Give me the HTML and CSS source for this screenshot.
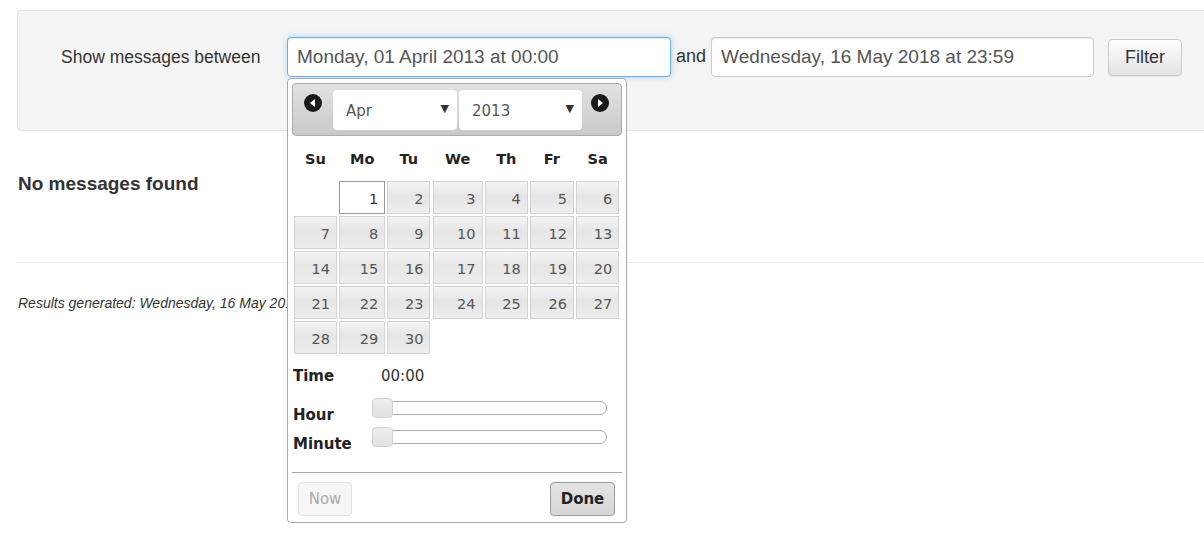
FILE: index.html
```html
<!DOCTYPE html>
<html lang="en">
<head>
  <meta charset="UTF-8">
  <title>Messages</title>
  <link rel="stylesheet" href="styles.css">
</head>
<body>

  <div class="page">
    <div class="filter-panel">
      <form class="filter-row">
        <label class="filter-label">Show messages between</label>
        <input class="date-input focused" type="text" value="Monday, 01 April 2013 at 00:00">
        <span class="and">and</span>
        <input class="date-input" type="text" value="Wednesday, 16 May 2018 at 23:59">
        <button type="button" class="filter-btn">Filter</button>
      </form>
    </div>

    <h4 class="empty">No messages found</h4>
    <hr class="sep">
    <p class="generated">Results generated: Wednesday, 16 May 2018 at 10:42</p>
  </div>

  <!-- datepicker popup -->
  <div class="datepicker">
    <div class="dp-header">
      <a class="dp-nav">
        <svg width="18" height="18" viewBox="0 0 18 18"><circle cx="9" cy="9" r="9" fill="#1a1a1a"/><path d="M11 5 L6 9 L11 13 Z" fill="#fff"/></svg>
      </a>
      <div class="dp-selects">
        <div class="dp-select month"><span>Apr</span><span class="caret">▼</span></div>
        <div class="dp-select year"><span>2013</span><span class="caret">▼</span></div>
      </div>
      <a class="dp-nav">
        <svg width="18" height="18" viewBox="0 0 18 18"><circle cx="9" cy="9" r="9" fill="#1a1a1a"/><path d="M7 5 L12 9 L7 13 Z" fill="#fff"/></svg>
      </a>
    </div>

    <div class="dp-grid" id="dp-grid">
      <div class="dow">Su</div>
      <div class="dow">Mo</div>
      <div class="dow">Tu</div>
      <div class="dow">We</div>
      <div class="dow">Th</div>
      <div class="dow">Fr</div>
      <div class="dow">Sa</div>
    </div>

    <div class="dp-time">
      <div class="time-row">
        <span class="t-label">Time</span>
        <span class="t-value">00:00</span>
      </div>
      <div class="slider-row">
        <span class="t-label">Hour</span>
        <div class="slider"><span class="handle"></span></div>
      </div>
      <div class="slider-row">
        <span class="t-label">Minute</span>
        <div class="slider"><span class="handle"></span></div>
      </div>
    </div>

    <div class="dp-buttons">
      <button type="button" class="dp-btn disabled">Now</button>
      <button type="button" class="dp-btn done">Done</button>
    </div>
  </div>

  <script>
    // april 2013 starts on a monday
    const grid = document.getElementById("dp-grid");
    const blank = document.createElement("div");
    grid.appendChild(blank);
    for (let d = 1; d <= 30; d++) {
      const cell = document.createElement("a");
      cell.className = d === 1 ? "day today" : "day";
      cell.textContent = d;
      grid.appendChild(cell);
    }
  </script>
</body>
</html>
```

FILE: styles.css
```css
html, body {
  margin: 0;
  overflow: hidden;
}

body {
  font-family: "Liberation Sans", Arial, sans-serif;
  color: #333;
  background: #fff;
  position: relative;
  height: 549px;
}

.page {
  padding: 10px 0 0 17px;
  margin-right: -20px;
}

.filter-panel {
  background: #f5f5f5;
  border: 1px solid #e3e3e3;
  border-radius: 4px;
  height: 119px;
  box-sizing: content-box;
}

.filter-row {
  display: flex;
  align-items: center;
  padding: 26px 0 0 43px;
  margin: 0;
}

.filter-label {
  font-size: 17.5px;
  color: #333;
  width: 226px;
}

.date-input {
  width: 384px;
  height: 40px;
  box-sizing: border-box;
  font-family: "Liberation Sans", Arial, sans-serif;
  font-size: 19px;
  color: #555;
  padding: 0 9px;
  border: 1px solid #ccc;
  border-radius: 4px;
  background: #fff;
  box-shadow: inset 0 1px 1px rgba(0,0,0,0.075);
  outline: none;
}

.date-input.focused {
  border-color: #66afe9;
  box-shadow: inset 0 1px 1px rgba(0,0,0,.075), 0 0 6px rgba(102,175,233,.5);
}

.and {
  font-size: 18px;
  margin: 0 5px 0 5px;
  padding-bottom: 2px;
}

.date-input + .and + .date-input {
  width: 383px;
}

.filter-btn {
  margin-left: 14px;
  width: 74px;
  height: 37px;
  font-family: "Liberation Sans", Arial, sans-serif;
  font-size: 18px;
  color: #333;
  background: linear-gradient(#fff, #e3e3e3);
  border: 1px solid #ccc;
  border-radius: 4px;
  box-shadow: 0 1px 1px rgba(0,0,0,0.06);
}

.empty {
  font-size: 19px;
  line-height: 20px;
  font-weight: bold;
  margin: 43px 0 0 1px;
}

.sep {
  border: none;
  border-top: 1px solid #eee;
  margin: 68px 0 0 0;
}

.generated {
  font-size: 14px;
  font-style: italic;
  margin: 31px 0 0 1px;
  line-height: 19px;
}

/* datepicker */
.datepicker {
  position: absolute;
  left: 287px;
  top: 78px;
  width: 340px;
  height: 445px;
  box-sizing: border-box;
  padding: 4px;
  background: #fff;
  border: 1px solid #aaa;
  border-radius: 4px;
  font-family: "DejaVu Sans", Verdana, sans-serif;
  color: #222;
}

.dp-header {
  height: 53px;
  box-sizing: border-box;
  border: 1px solid #aaa;
  border-radius: 4px;
  background: linear-gradient(#e2e2e2, #c9c9c9);
  display: flex;
  align-items: flex-start;
  padding: 6px 0 0 11px;
}

.dp-nav {
  display: block;
  margin-top: 4px;
  height: 18px;
}

.dp-selects {
  display: flex;
  gap: 2px;
  margin-left: 11px;
  margin-right: 9px;
}

.dp-select {
  height: 40px;
  box-sizing: border-box;
  background: #fff;
  border-radius: 4px;
  display: flex;
  align-items: center;
  justify-content: space-between;
  padding: 2px 8px 0 13px;
  font-size: 15px;
  color: #555;
}

.dp-select.month {
  width: 124px;
}

.dp-select.year {
  width: 123px;
}

.caret {
  font-size: 11px;
  color: #333;
  margin-top: -6px;
}

.dp-grid {
  display: grid;
  grid-template-columns: 43px 46px 43px 50px 43px 44px 43px;
  grid-auto-rows: 33px;
  column-gap: 2.2px;
  row-gap: 2px;
  margin: 0 0 0 2px;
  padding-top: 10px;
}

.dow {
  font-weight: bold;
  font-size: 14.5px;
  text-align: center;
  line-height: 26px;
  height: 26px;
  margin-bottom: 9px;
  color: #222;
}

.day {
  display: block;
  box-sizing: border-box;
  border: 1px solid #d3d3d3;
  background: linear-gradient(#f4f4f4 0%, #e6e6e6 45%, #ededed 100%);
  color: #555;
  font-size: 14.5px;
  text-align: right;
  padding: 2px 6px 0 0;
  line-height: 30px;
}

.day.today {
  background: #fff;
  border-color: #999;
  color: #363636;
}

.dp-time {
  padding: 9px 0 0 1px;
}

.time-row {
  display: flex;
  align-items: center;
  height: 26px;
}

.t-label {
  font-weight: bold;
  font-size: 15px;
  width: 80px;
  color: #222;
}

.t-value {
  font-size: 15px;
  color: #333;
  margin-left: 8px;
}

.slider-row {
  display: flex;
  align-items: center;
  height: 29px;
}

.time-row + .slider-row {
  margin-top: 4px;
}

.slider-row .t-label {
  padding-top: 14px;
  width: 79px;
}

.slider {
  position: relative;
  width: 235px;
  height: 14px;
  box-sizing: border-box;
  border: 1px solid #aaa;
  border-radius: 7px;
  background: #fff;
}

.handle {
  position: absolute;
  left: -1px;
  top: -4px;
  width: 21px;
  height: 20px;
  box-sizing: border-box;
  border: 1px solid #d3d3d3;
  border-radius: 4px;
  background: linear-gradient(#eee, #e2e2e2);
}

.dp-buttons {
  position: absolute;
  left: 4px;
  right: 4px;
  top: 393px;
  border-top: 1px solid #aaa;
  display: flex;
  justify-content: space-between;
  padding: 9px 7px 0 6px;
}

.dp-btn {
  height: 34px;
  font-family: "DejaVu Sans", Verdana, sans-serif;
  font-size: 15px;
  border-radius: 4px;
  padding: 0 8px;
}

.dp-btn.disabled {
  width: 54px;
  color: #aaa;
  background: #f6f6f6;
  border: 1px solid #e3e3e3;
}

.dp-btn.done {
  width: 65px;
  font-weight: bold;
  color: #222;
  background: linear-gradient(#e4e4e4, #d6d6d6);
  border: 1px solid #999;
}
```
